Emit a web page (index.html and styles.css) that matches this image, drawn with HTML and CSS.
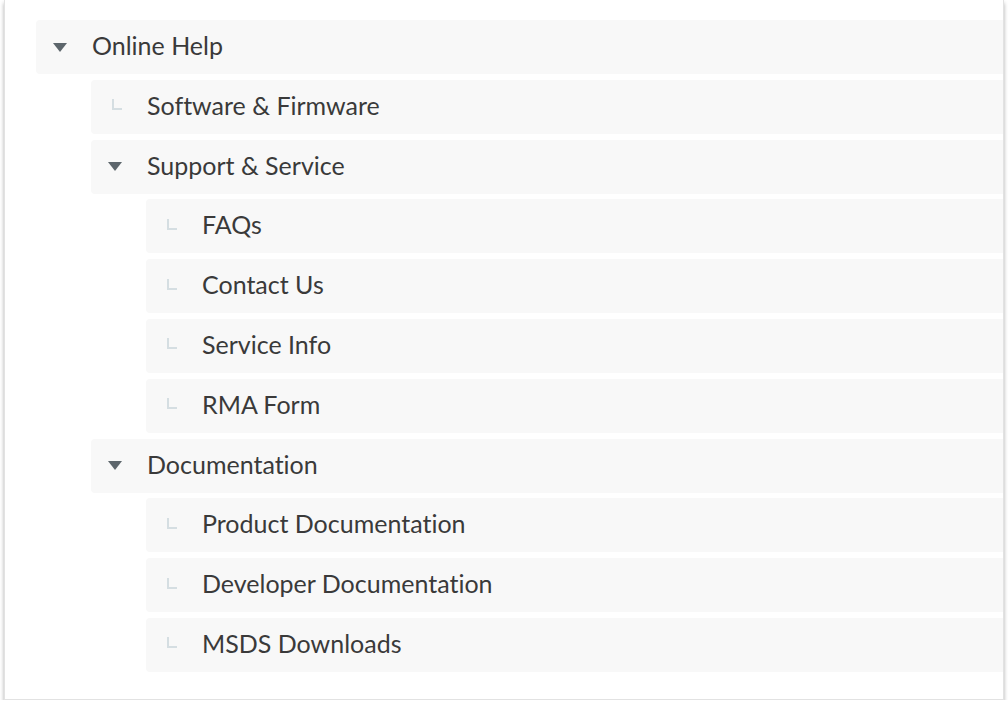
FILE: index.html
```html
<!DOCTYPE html>
<html>
<head>
<meta charset="utf-8">
<link rel="stylesheet" href="styles.css">
</head>
<body>
<div class="card">
  <ul class="tree">
    <li>
      <div class="row"><span class="icon"><span class="caret"></span></span><span class="label">Online Help</span></div>
      <ul class="tree sub">
        <li><div class="row"><span class="icon"><span class="elbow"></span></span><span class="label">Software &amp; Firmware</span></div></li>
        <li>
          <div class="row"><span class="icon"><span class="caret"></span></span><span class="label">Support &amp; Service</span></div>
          <ul class="tree sub">
            <li><div class="row"><span class="icon"><span class="elbow"></span></span><span class="label">FAQs</span></div></li>
            <li><div class="row"><span class="icon"><span class="elbow"></span></span><span class="label">Contact Us</span></div></li>
            <li><div class="row"><span class="icon"><span class="elbow"></span></span><span class="label">Service Info</span></div></li>
            <li><div class="row"><span class="icon"><span class="elbow"></span></span><span class="label">RMA Form</span></div></li>
          </ul>
        </li>
        <li>
          <div class="row"><span class="icon"><span class="caret"></span></span><span class="label">Documentation</span></div>
          <ul class="tree sub">
            <li><div class="row"><span class="icon"><span class="elbow"></span></span><span class="label">Product Documentation</span></div></li>
            <li><div class="row"><span class="icon"><span class="elbow"></span></span><span class="label">Developer Documentation</span></div></li>
            <li><div class="row"><span class="icon"><span class="elbow"></span></span><span class="label">MSDS Downloads</span></div></li>
          </ul>
        </li>
      </ul>
    </li>
  </ul>
</div>
</body>
</html>
```

FILE: styles.css
```css
html, body {
  margin: 0;
  padding: 0;
  background: #ffffff;
}
body {
  font-family: Lato, Inter, sans-serif;
  color: #3a3a3a;
}
.card {
  box-sizing: border-box;
  margin: 0 4px;
  height: 700px;
  background: #ffffff;
  border: 1px solid #e2e2e2;
  border-top: none;
  box-shadow: 0 3px 4px rgba(0, 0, 0, 0.32);
  padding: 20px 0 0 31px;
  overflow: hidden;
}
.tree {
  list-style: none;
  margin: 0;
  padding: 0;
  display: flex;
  flex-direction: column;
  gap: 5.8px;
}
.tree li {
  display: flex;
  flex-direction: column;
  gap: 5.8px;
}
.tree.sub {
  padding-left: 55px;
}
.row {
  display: flex;
  align-items: center;
  height: 54px;
  background: #f8f8f8;
  border-radius: 4px 0 0 4px;
  padding-left: 16px;
}
.icon {
  width: 40px;
  flex: none;
  display: flex;
  align-items: center;
  height: 54px;
}
.caret {
  width: 0;
  height: 0;
  border-left: 7.5px solid transparent;
  border-right: 7.5px solid transparent;
  border-top: 9px solid #5d666c;
  margin-left: 1px;
  margin-top: 0;
}
.elbow {
  display: block;
  width: 10px;
  height: 11px;
  border-left: 2px solid #d5dee2;
  border-bottom: 2px solid #d5dee2;
  margin-left: 5px;
  margin-top: -4px;
  box-sizing: border-box;
}
.label {
  font-size: 25px;
  line-height: 1;
  white-space: nowrap;
  font-variant-ligatures: none;
  margin-top: -3px;
}
```
